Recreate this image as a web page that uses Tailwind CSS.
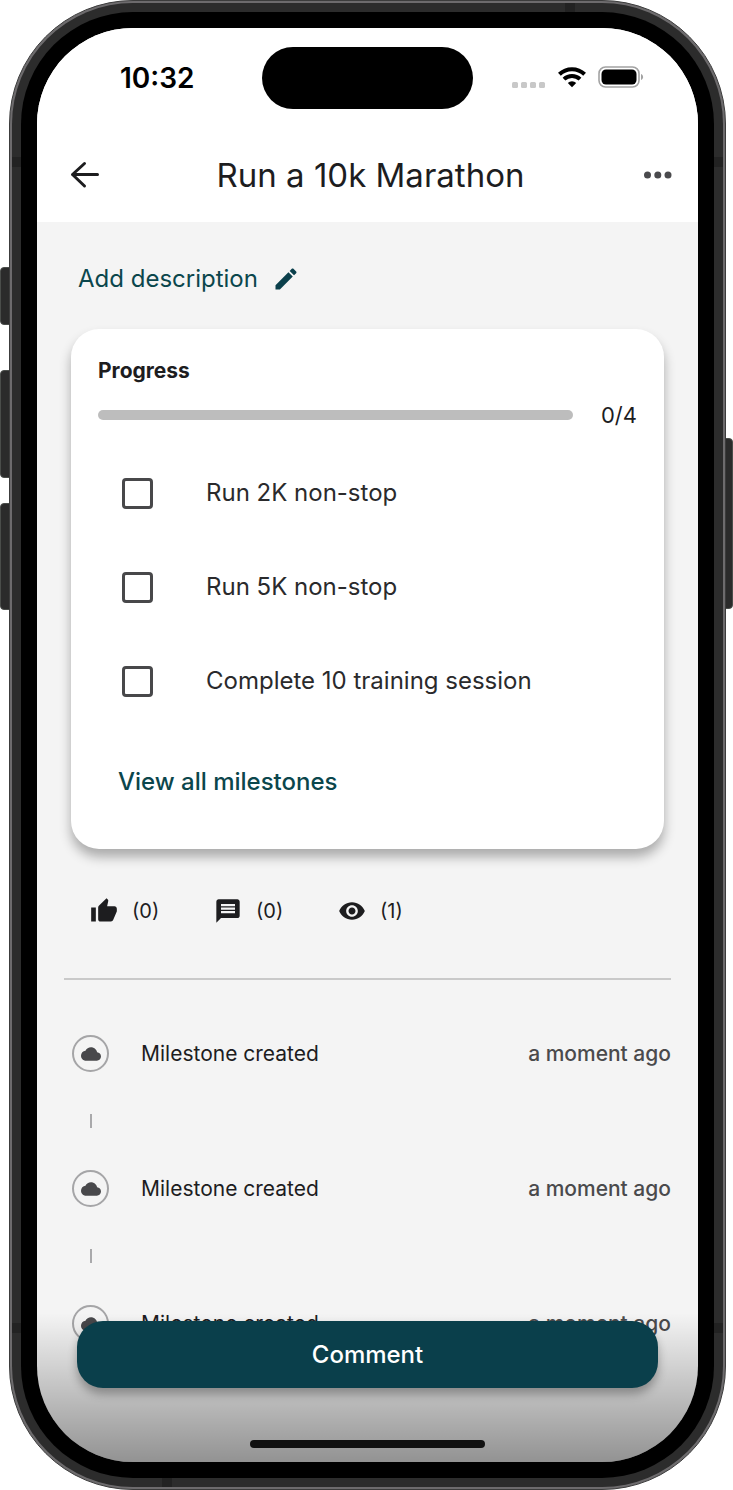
<!DOCTYPE html>
<html lang="en">
<head>
  <meta charset="UTF-8">
  <meta name="viewport" content="width=device-width, initial-scale=1.0">
  <title>Run a 10k Marathon</title>
  <script src="https://cdn.jsdelivr.net/npm/@tailwindcss/browser@4"></script>
</head>
<body class="bg-white text-[#1d1d1f] font-['Inter','Roboto',sans-serif]">

  <!-- icons shared by several rows -->
  <svg class="hidden" aria-hidden="true">
    <symbol id="cloud" viewBox="0 0 24 24">
      <path d="M19.35 10.04C18.67 6.59 15.64 4 12 4 9.11 4 6.6 5.64 5.35 8.04 2.34 8.36 0 10.91 0 14c0 3.31 2.69 6 6 6h13c2.76 0 5-2.24 5-5 0-2.64-2.05-4.78-4.65-4.96z"/>
    </symbol>
  </svg>

  <div class="relative flex min-h-screen pl-[9px] pr-[7px]">

    <!-- side buttons -->
    <span class="absolute left-0 top-[267px] h-[58px] w-3 rounded-l-sm border border-[#4a4d4a] bg-[#2b2b2b]"></span>
    <span class="absolute left-0 top-[370px] h-[108px] w-3 rounded-l-sm border border-[#4a4d4a] bg-[#2b2b2b]"></span>
    <span class="absolute left-0 top-[503px] h-[107px] w-3 rounded-l-sm border border-[#4a4d4a] bg-[#2b2b2b]"></span>
    <span class="absolute right-0 top-[438px] h-[171px] w-3 rounded-r-sm border border-[#4a4d4a] bg-[#2b2b2b]"></span>

    <!-- phone body -->
    <div class="relative flex flex-1 rounded-[124px] border border-[#3c3c3c] bg-[#6d6b6d] p-[2px]">
      <div class="relative flex flex-1 rounded-[121px] bg-[#2c2c2c] p-[9px]">
        <span class="absolute left-0 top-[154px] h-[10px] w-full bg-[#222]"></span>
        <span class="absolute bottom-[154px] left-0 h-[10px] w-full bg-[#222]"></span>
        <span class="absolute right-[148px] top-0 h-[9px] w-[10px] bg-[#222]"></span>
        <span class="absolute bottom-0 left-[150px] h-[9px] w-[10px] bg-[#222]"></span>
        <div class="relative flex flex-1 rounded-[112px] bg-black p-4">

          <div class="relative flex-1 overflow-hidden rounded-[96px] bg-[#f4f4f4]">

            <!-- status bar -->
            <div class="grid h-[100px] grid-cols-[1fr_211px_1fr] items-center bg-white text-black">
              <time class="pl-[83px] text-[28px] font-semibold leading-8">10:32</time>
              <div class="h-[62px] rounded-full bg-black"></div>
              <div class="flex items-center justify-end pb-[2px] pr-[54px]">
                <svg class="mr-3 mt-4 h-[6px] w-[34px]" viewBox="0 0 34 6" fill="#c8c8c8">
                  <rect x="0" width="6" height="6" rx="1.5"/>
                  <rect x="9" width="6" height="6" rx="1.5"/>
                  <rect x="18" width="6" height="6" rx="1.5"/>
                  <rect x="27" width="6" height="6" rx="1.5"/>
                </svg>
                <svg class="mr-3 h-[22px] w-7" viewBox="0 0 28 22" fill="none" stroke="#000" stroke-width="4">
                  <path d="M1.4 8.2a18.2 18.2 0 0 1 25.2 0"/>
                  <path d="M6 13.1a11.6 11.6 0 0 1 16 0"/>
                  <path d="M14 21.2l-4.2-4.3a6 6 0 0 1 8.4 0z" fill="#000" stroke="none"/>
                </svg>
                <svg class="h-[22px] w-[46px]" viewBox="0 0 46 22">
                  <rect x="1" y="1" width="40" height="20" rx="6.5" fill="none" stroke="#a3a3a3" stroke-width="1.6"/>
                  <rect x="3.5" y="3.5" width="35" height="15" rx="4.5"/>
                  <path d="M43 8c2.8.8 2.8 5.2 0 6z" fill="#a3a3a3"/>
                </svg>
              </div>
            </div>

            <!-- app bar -->
            <header class="grid h-[94px] grid-cols-[1fr_auto_1fr] items-center bg-white pl-8 pr-[26px]">
              <button type="button" aria-label="Back" class="w-8">
                <svg class="h-7 w-[30px]" viewBox="0 0 30 28" fill="none" stroke="#1d1d1f" stroke-width="3" stroke-linecap="round" stroke-linejoin="round">
                  <path d="M15.500 2.500L3.500 13.500 15.500 25M3.500 13.500h25"/>
                </svg>
              </button>
              <h1 class="text-[33px] leading-10">Run a 10k Marathon</h1>
              <button type="button" aria-label="More options" class="w-7 justify-self-end">
                <svg class="h-2 w-7" viewBox="0 0 28 8" fill="#4a4a4d">
                  <circle cx="3.5" cy="4" r="3.5"/>
                  <circle cx="13.8" cy="4" r="3.5"/>
                  <circle cx="24" cy="4" r="3.5"/>
                </svg>
              </button>
            </header>

            <main>
              <div class="flex h-[107px] items-center px-[41px] pt-[7px]">
                <button type="button" class="flex items-center gap-[14px] text-2xl text-[#0b464c]">
                  Add description
                  <svg class="h-7 w-7" viewBox="0 0 24 24" fill="#0a3f4b">
                    <path d="M3 17.25V21h3.75L17.81 9.94l-3.75-3.75L3 17.25zM20.71 7.04c.39-.39.39-1.02 0-1.41l-2.34-2.34c-.39-.39-1.02-.39-1.41 0l-1.83 1.83 3.75 3.75 1.83-1.83z"/>
                  </svg>
                </button>
              </div>

              <section class="mx-[34px] rounded-[28px] bg-white px-[27px] pb-[51px] pt-7 shadow-[0_8px_12px_rgba(0,0,0,0.3)]">
                <h2 class="text-[21px] font-bold leading-7">Progress</h2>
                <div class="mt-4 flex items-center gap-7">
                  <div role="progressbar" aria-label="Progress" aria-valuemin="0" aria-valuemax="4" aria-valuenow="0" class="h-[10px] flex-1 rounded-full bg-[#bdbdbd]"></div>
                  <span class="text-[22px] leading-7">0/4</span>
                </div>

                <ul class="mt-[17px] pl-6 text-2xl text-[#2a2a2c]">
                  <li>
                    <label class="flex h-[94px] items-center gap-[53px]">
                      <input type="checkbox" class="size-[31px] shrink-0 appearance-none rounded-sm border-3 border-[#48484a] checked:bg-[#0a3f4b]">
                      Run 2K non-stop
                    </label>
                  </li>
                  <li>
                    <label class="flex h-[94px] items-center gap-[53px]">
                      <input type="checkbox" class="size-[31px] shrink-0 appearance-none rounded-sm border-3 border-[#48484a] checked:bg-[#0a3f4b]">
                      Run 5K non-stop
                    </label>
                  </li>
                  <li>
                    <label class="flex h-[94px] items-center gap-[53px]">
                      <input type="checkbox" class="size-[31px] shrink-0 appearance-none rounded-sm border-3 border-[#48484a] checked:bg-[#0a3f4b]">
                      Complete 10 training session
                    </label>
                  </li>
                </ul>

                <a href="#" class="ml-5 mt-[38px] inline-block text-2xl font-medium leading-8 text-[#0b464c]">View all milestones</a>
              </section>

              <!-- reactions -->
              <ul class="mt-12 flex pl-[53px] text-xl text-[#1d1d1f]">
                <li class="flex w-[124px] items-center gap-[14px]">
                  <svg class="h-7 w-7" viewBox="0 0 24 24" fill="currentColor">
                    <path d="M1 21h4V9H1v12zm22-11c0-1.1-.9-2-2-2h-6.31l.95-4.57.03-.32c0-.41-.17-.79-.44-1.06L14.17 1 7.59 7.59C7.22 7.95 7 8.45 7 9v10c0 1.1.9 2 2 2h9c.83 0 1.54-.5 1.84-1.22l3.02-7.05c.09-.23.14-.47.14-.73v-2z"/>
                  </svg>
                  (0)
                </li>
                <li class="flex w-[124px] items-center gap-[14px]">
                  <svg class="h-7 w-7" viewBox="0 0 24 24" fill="currentColor">
                    <path d="M20 2H4c-1.1 0-1.99.9-1.99 2L2 22l4-4h14c1.1 0 2-.9 2-2V4c0-1.1-.9-2-2-2zm-2 12H6v-2h12v2zm0-3H6V9h12v2zm0-3H6V6h12v2z"/>
                  </svg>
                  (0)
                </li>
                <li class="flex w-[124px] items-center gap-[14px]">
                  <svg class="h-7 w-7" viewBox="0 0 24 24" fill="currentColor">
                    <path d="M12 4.500C7 4.500 2.730 7.610 1 12c1.730 4.390 6 7.500 11 7.500s9.270-3.110 11-7.500c-1.730-4.390-6-7.500-11-7.500zM12 17c-2.760 0-5-2.240-5-5s2.240-5 5-5 5 2.240 5 5-2.240 5-5 5zm0-8c-1.660 0-3 1.340-3 3s1.340 3 3 3 3-1.340 3-3-1.340-3-3-3z"/>
                  </svg>
                  (1)
                </li>
              </ul>

              <hr class="mx-[27px] mt-[53px] border-t-2 border-[#c9c9c9]">

              <!-- activity -->
              <ol class="pl-[35px] pr-[27px] pt-[55px] text-[21px]">
                <li class="h-[135px]">
                  <div class="flex items-center">
                    <span class="flex size-[37px] items-center justify-center rounded-full border-2 border-[#a5a5a7]">
                      <svg class="size-5" fill="#48484b"><use href="#cloud"/></svg>
                    </span>
                    <span class="ml-8 flex-1">Milestone created</span>
                    <span class="font-medium text-[#4a4a4c]">a moment ago</span>
                  </div>
                  <div class="ml-[18px] mt-[42px] h-[14px] w-[2px] bg-[#a9a9ab]"></div>
                </li>
                <li class="h-[135px]">
                  <div class="flex items-center">
                    <span class="flex size-[37px] items-center justify-center rounded-full border-2 border-[#a5a5a7]">
                      <svg class="size-5" fill="#48484b"><use href="#cloud"/></svg>
                    </span>
                    <span class="ml-8 flex-1">Milestone created</span>
                    <span class="font-medium text-[#4a4a4c]">a moment ago</span>
                  </div>
                  <div class="ml-[18px] mt-[42px] h-[14px] w-[2px] bg-[#a9a9ab]"></div>
                </li>
                <li>
                  <div class="flex items-center">
                    <span class="flex size-[37px] items-center justify-center rounded-full border-2 border-[#a5a5a7]">
                      <svg class="size-5" fill="#48484b"><use href="#cloud"/></svg>
                    </span>
                    <span class="ml-8 flex-1">Milestone created</span>
                    <span class="font-medium text-[#4a4a4c]">a moment ago</span>
                  </div>
                </li>
              </ol>
            </main>

            <!-- comment bar over the list -->
            <footer class="absolute inset-x-0 bottom-0 flex flex-col items-center bg-linear-to-b from-transparent to-black/40 px-10 pb-[14px] pt-2">
              <button type="button" class="h-[67px] w-full rounded-[26px] bg-[#0a3f4b] text-2xl font-medium text-white shadow-[0_6px_10px_rgba(0,0,0,0.3)]">Comment</button>
              <div class="mt-[52px] h-2 w-[235px] rounded-full bg-[#111]"></div>
            </footer>

          </div>
        </div>
      </div>
    </div>
  </div>

</body>
</html>
